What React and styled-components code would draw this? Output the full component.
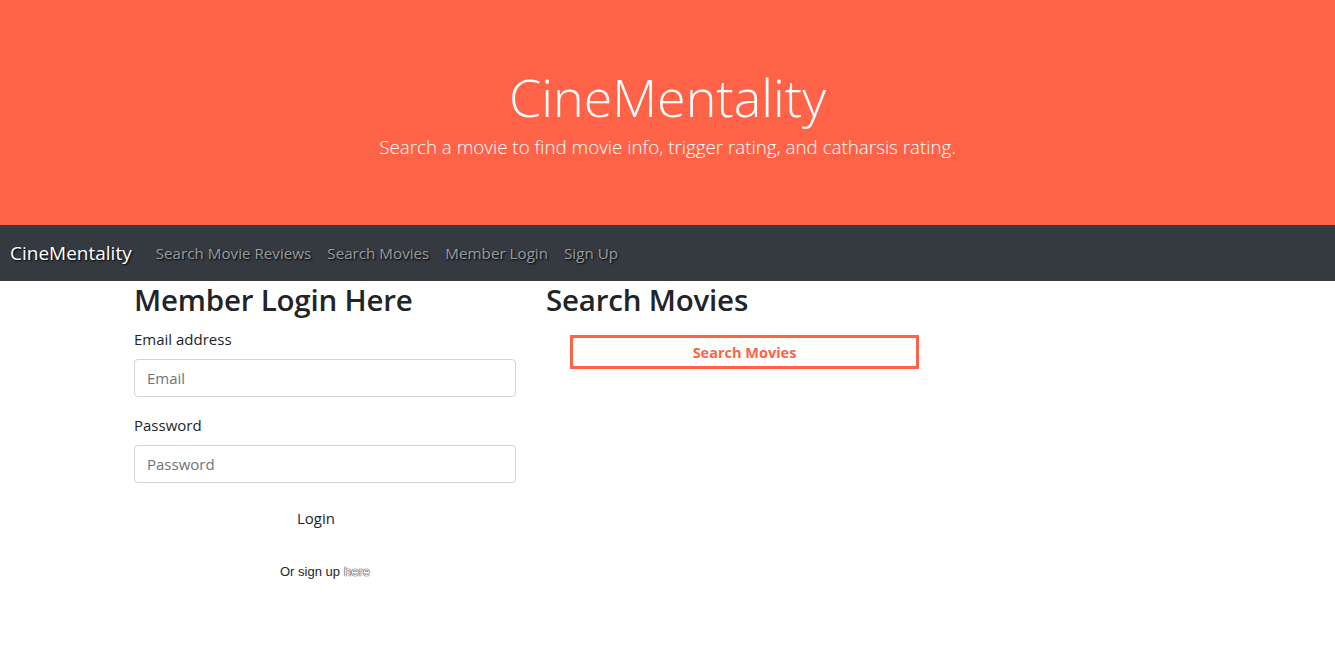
import React from "react";
import styled, { createGlobalStyle } from "styled-components";

const Global = createGlobalStyle`
  body {
    margin: 0;
    font-family: "Open Sans", "Noto Sans", sans-serif;
    color: #212529;
    background: #fff;
  }
  * { box-sizing: border-box; }
`;

const Jumbo = styled.header`
  height: 225px;
  background: #ff6347;
  color: #fff;
  text-align: center;
  padding-top: 66px;
`;

const Title = styled.h1`
  margin: 0;
  font-size: 52px;
  font-weight: 300;
  line-height: 1.2;
`;

const Lead = styled.p`
  margin: 5px 0 0;
  font-size: 18.8px;
  font-weight: 300;
  line-height: 1.5;
`;

const Navbar = styled.nav`
  height: 56px;
  background: #343a40;
  display: flex;
  align-items: center;
  padding: 0 10px;
  text-shadow: 1px 1px 2px #000;
`;

const Brand = styled.a`
  color: #fff;
  font-size: 19px;
  margin-right: 16px;
  text-decoration: none;
`;

const NavLink = styled.a`
  color: rgba(255, 255, 255, 0.55);
  font-size: 15.2px;
  padding: 0 8px;
  text-decoration: none;
`;

const Main = styled.main`
  display: grid;
  grid-template-columns: 382px 382px;
  column-gap: 30px;
  padding-left: 134px;
`;

const Heading = styled.h2`
  margin: 0 0 8px;
  font-size: 29.5px;
  font-weight: 600;
  line-height: 38px;
  letter-spacing: -0.2px;
`;

const Group = styled.div`
  margin-bottom: 16px;
`;

const Label = styled.label`
  display: block;
  font-size: 15px;
  line-height: 24px;
  margin-bottom: 8px;
`;

const Input = styled.input`
  display: block;
  width: 100%;
  height: 38px;
  padding: 6px 12px;
  font: inherit;
  font-size: 15px;
  color: #495057;
  border: 1px solid #ced4da;
  border-radius: 4px;
  &::placeholder { color: #6c757d; }
`;

const ButtonRow = styled.div`
  width: 364px;
  text-align: center;
`;

const LoginButton = styled.button`
  background: transparent;
  border: 0;
  font: inherit;
  font-size: 15px;
  color: #212529;
  line-height: 24px;
  padding: 7px 12px;
`;

const SignUp = styled.p`
  margin: 24px 0 0;
  text-align: center;
  font-size: 13px;
  line-height: 21px;
  font-family: "Liberation Sans", Arial, sans-serif;
`;

const HereLink = styled.a`
  color: #fff;
  text-shadow: 0 0 1px #000, 0 0 1px #000;
  margin-left: 4px;
`;

const SearchBox = styled.button`
  display: block;
  margin: 16px 0 0 24px;
  width: 349px;
  height: 34px;
  background: #fff;
  border: 3px solid #ff6347;
  color: #ff6347;
  font: inherit;
  font-size: 14.5px;
  font-weight: 700;
`;

export default function App() {
  return (
    <>
      <Global />
      <Jumbo>
        <Title>CineMentality</Title>
        <Lead>Search a movie to find movie info, trigger rating, and catharsis rating.</Lead>
      </Jumbo>
      <Navbar>
        <Brand href="#">CineMentality</Brand>
        <NavLink href="#">Search Movie Reviews</NavLink>
        <NavLink href="#">Search Movies</NavLink>
        <NavLink href="#">Member Login</NavLink>
        <NavLink href="#">Sign Up</NavLink>
      </Navbar>
      <Main>
        <section>
          <Heading>Member Login Here</Heading>
          <Group>
            <Label>Email address</Label>
            <Input type="email" placeholder="Email" />
          </Group>
          <Group>
            <Label>Password</Label>
            <Input type="password" placeholder="Password" />
          </Group>
          <ButtonRow>
            <LoginButton>Login</LoginButton>
          </ButtonRow>
          <SignUp>
            Or sign up<HereLink>here</HereLink>
          </SignUp>
        </section>
        <section>
          <Heading>Search Movies</Heading>
          <SearchBox>Search Movies</SearchBox>
        </section>
      </Main>
    </>
  );
}
